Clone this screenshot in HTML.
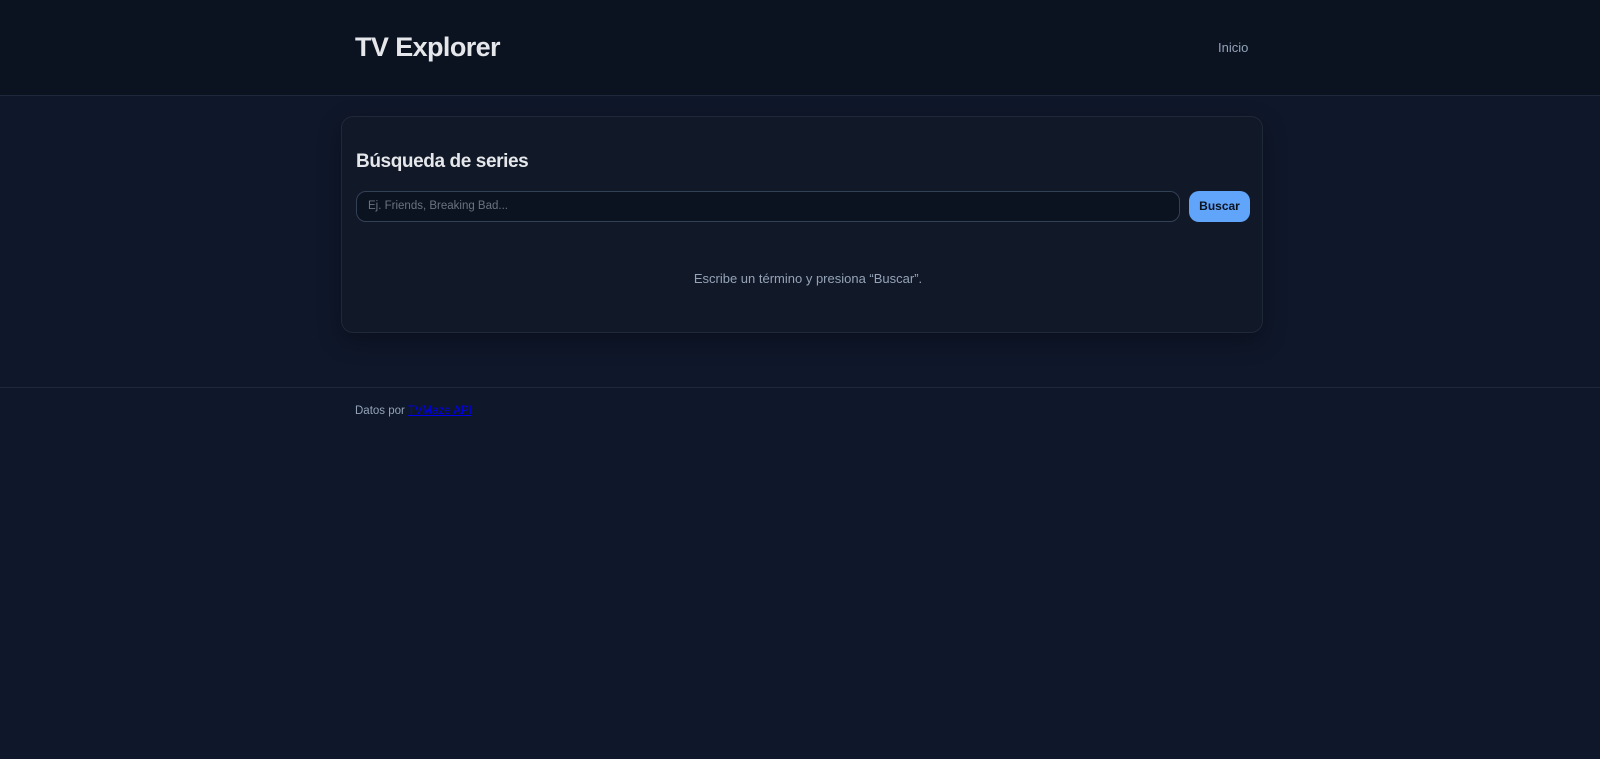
<!DOCTYPE html>
<html><head><meta charset="utf-8"><style>
*{box-sizing:border-box;margin:0;padding:0}
body{width:1600px;height:759px;background:#0f172a;font-family:"Liberation Sans",sans-serif;color:#e5e7eb;overflow:hidden}
header{height:96px;background:#0b1220;border-bottom:1px solid #1e293b;position:relative}
.logo{position:absolute;left:355px;top:32px;font-size:27px;font-weight:bold;color:#e5e7eb;letter-spacing:-0.6px}
.nav{position:absolute;left:1218px;top:40px;font-size:13px;color:#94a3b8}
.card{position:absolute;left:341px;top:116px;width:922px;height:217px;background:#111827;border:1px solid #1f2937;border-radius:12px;box-shadow:0 8px 24px rgba(0,0,0,.3)}
h2{position:absolute;left:14px;top:34px;font-size:19px;font-weight:bold;color:#e5e7eb;letter-spacing:-0.4px}
.inp{position:absolute;left:14px;top:74px;width:824px;height:31px;background:#0b1220;border:1px solid #334155;border-radius:10px;font-size:11.5px;color:#6b7280;padding:8px 11px}
.btn{position:absolute;left:847px;top:74px;width:61px;height:31px;background:#60a5fa;border-radius:10px;color:#0b1220;font-size:12px;font-weight:bold;text-align:center;line-height:31px}
.msg{position:absolute;left:0;right:0;top:154px;text-align:center;font-size:13px;color:#94a3b8;padding-left:12px}
.foot{position:absolute;left:0;right:0;top:387px;border-top:1px solid #1e293b}
.ft{position:absolute;left:355px;top:405px;font-size:11.5px;color:#94a3b8}
.ft a{color:#0000ee;text-decoration:underline}
</style></head><body>
<header><div class="logo">TV Explorer</div><div class="nav">Inicio</div></header>
<div class="card"><h2>Búsqueda de series</h2><div class="inp">Ej. Friends, Breaking Bad...</div><div class="btn">Buscar</div><div class="msg">Escribe un término y presiona “Buscar”.</div></div>
<div class="foot"></div>
<div class="ft">Datos por <a>TVMaze API</a></div>
</body></html>
